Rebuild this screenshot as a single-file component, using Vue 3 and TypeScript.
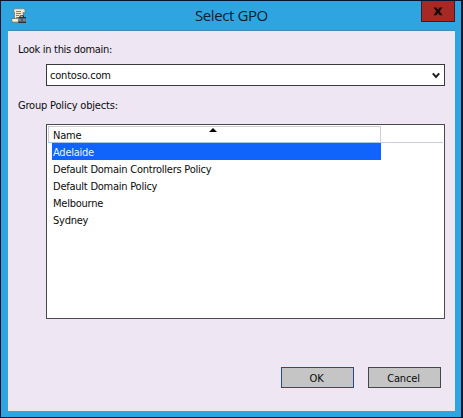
<script setup lang="ts">
import { ref } from 'vue'

const domain = ref('contoso.com')
const selected = ref('Adelaide')
const policies: string[] = [
  'Adelaide',
  'Default Domain Controllers Policy',
  'Default Domain Policy',
  'Melbourne',
  'Sydney',
]
</script>

<template>
  <div class="window">
    <header class="titlebar">
      <svg class="app-icon" width="16" height="16" viewBox="0 0 16 16">
        <path d="M3 1.500Q3 .8 4 .8h8.500q1.500 0 1.500 1.700v2h-2V12H3.500V4H2.500z" fill="#f6ecd2" stroke="#77725c" stroke-width=".7" />
        <path d="M5 3.500h5M5 5.500h5M5 7.500h3M5 9.500h2" stroke="#77715c" stroke-width=".9" />
        <path d="M1 10.500h6.500v3.700H2Q.6 13.800.6 12z" fill="#f8efd6" stroke="#5d5847" stroke-width=".7" />
        <path d="M9 9V7.800h3.500V9" fill="none" stroke="#28313a" />
        <path d="M7.500 9h7.500v5.500H7.500z" fill="#4b6074" />
        <path d="M7.500 9.500h7.500M7.500 14.500h7.500" stroke="#2a3038" />
        <path d="M7.500 12h2.500M12 12h2.500" stroke="#b8ad88" />
      </svg>
      <h1 class="title">Select GPO</h1>
      <button class="close" aria-label="Close">
        <svg width="10" height="9" viewBox="0 0 10 9">
          <path d="M.5.5h2.900L5 2.700 6.600.5h2.900L6.700 4.300 9.500 8.200H6.600L5 5.900 3.400 8.200H.5l2.800-3.900z" fill="#160808" />
        </svg>
      </button>
    </header>
    <main class="body">
      <div class="label">Look in this domain:</div>
      <div class="combo">
        <span class="combo-text">{{ domain }}</span>
        <svg width="8" height="7" viewBox="0 0 8 7">
          <path d="M.8 1.300 4 5 7.200 1.300" fill="none" stroke="#222" stroke-width="2" />
        </svg>
      </div>
      <div class="label group">Group Policy objects:</div>
      <div class="list">
        <div class="head">
          <div class="column">
            <span class="column-name">Name</span>
            <svg class="sort" width="8" height="4" viewBox="0 0 8 4"><path d="M0 4 4 0l4 4z" fill="#000" /></svg>
          </div>
          <div class="rest"></div>
        </div>
        <div
          v-for="policy in policies"
          :key="policy"
          class="row"
          :class="{ active: policy === selected }"
          @click="selected = policy"
        >{{ policy }}</div>
      </div>
      <div class="actions">
        <button class="btn primary">OK</button>
        <button class="btn">Cancel</button>
      </div>
    </main>
  </div>
</template>

<style>
body {
  margin: 0;
  overflow: hidden;
}
</style>

<style scoped>
* {
  box-sizing: border-box;
}
.window {
  width: 463px;
  height: 418px;
  display: flex;
  flex-direction: column;
  padding: 0 6px 6px 7px;
  border: 1px solid #07162f;
  border-right-width: 2px;
  background: #2ea5e0;
  color: #0b0b0b;
  font: 11px/17px "DejaVu Sans Condensed", "DejaVu Sans", sans-serif;
  font-stretch: condensed;
  letter-spacing: -0.24px;
}
.titlebar {
  height: 30px;
  flex: none;
  display: grid;
  grid-template-columns: 52px 1fr 33px;
  align-items: start;
  border-bottom: 1px solid #4589b5;
}
.app-icon {
  margin: 7px 0 0 3px;
}
.title {
  margin: 4px 0 0 135px;
  font: 400 15px/21px "Open Sans", "Noto Sans", sans-serif;
  letter-spacing: -0.4px;
  color: #06202f;
  white-space: nowrap;
}
.close {
  width: 34px;
  height: 21px;
  margin-left: -1px;
  padding: 1px 0 0;
  display: flex;
  align-items: center;
  justify-content: center;
  border: 1px solid #401c20;
  border-top: 0;
  background: #a72824;
}
.body {
  flex: 1;
  display: flex;
  flex-direction: column;
  padding: 10px 10px 0;
  background: #eee7f3;
}
.label {
  height: 17px;
  letter-spacing: -0.3px;
  white-space: nowrap;
}
.group {
  letter-spacing: -0.19px;
}
.combo {
  width: 399px;
  height: 22px;
  flex: none;
  margin: 6px 0 11px 28px;
  padding: 0 4px 0 3px;
  display: flex;
  align-items: center;
  justify-content: space-between;
  border: 1px solid #39393c;
  background: #fff;
}
.combo-text {
  letter-spacing: -0.2px;
}
.list {
  width: 399px;
  height: 195px;
  flex: none;
  margin: 10px 0 0 28px;
  padding: 1px 1px 0;
  border: 1px solid #4a494e;
  background: #fff;
}
.head {
  height: 17px;
  display: flex;
}
.column {
  width: 333px;
  display: flex;
  border: 1px solid #cfccd8;
  border-bottom-color: #a9c6e4;
}
.column-name {
  width: 160px;
  padding-left: 4px;
}
.sort {
  margin-top: 1px;
}
.rest {
  flex: 1;
  border-bottom: 1px solid #d3cadb;
}
.row {
  width: 329px;
  height: 17px;
  margin-left: 4px;
  padding-left: 1px;
  line-height: 19px;
  white-space: nowrap;
}
.active {
  background: #1064fb;
  color: #e8f4ff;
}
.actions {
  display: flex;
  gap: 14px;
  margin: 48px 0 0 263px;
}
.btn {
  width: 73px;
  height: 21px;
  padding: 1px 2px 0 0;
  border: 1px solid #45454a;
  background: #c5c5c6;
  color: #0b0b0b;
  font: inherit;
  letter-spacing: -0.15px;
}
.primary {
  border-color: #294b80;
}
</style>
